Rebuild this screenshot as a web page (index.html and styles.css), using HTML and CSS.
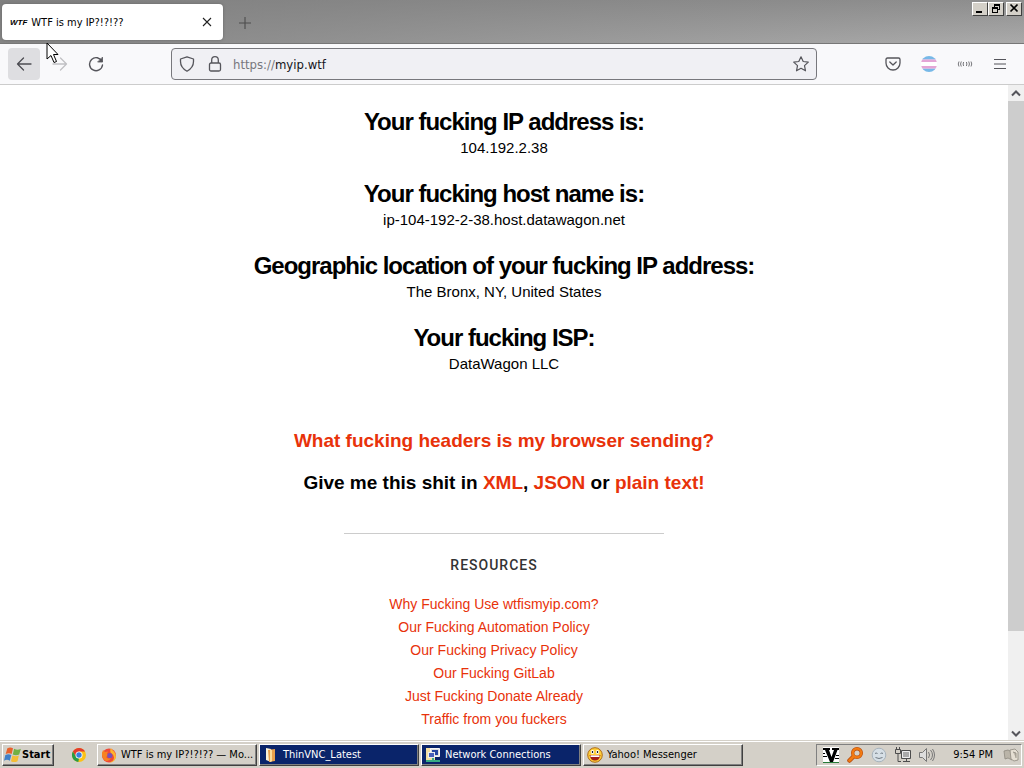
FILE: index.html
```html
<!DOCTYPE html>
<html lang="en">
<head>
<meta charset="utf-8">
<meta name="viewport" content="width=device-width, initial-scale=1">
<title>WTF is my IP?!?!??</title>
<link rel="stylesheet" href="styles.css">
</head>
<body>
<div class="desktop">
  <header class="titlebar">
    <div class="tab">
      <span class="favicon">WTF</span>
      <span class="tab-title">WTF is my IP?!?!??</span>
      <button class="plain tab-close" aria-label="Close tab"><svg width="10" height="10" viewBox="0 0 10 10" fill="none" stroke="#222" stroke-width="1.1"><path d="M1 1l8 8M9 1l-8 8"/></svg></button>
    </div>
    <button class="plain new-tab" aria-label="New tab"><svg width="14" height="14" viewBox="0 0 14 14" fill="none" stroke="#4c4c4c" stroke-width="1.1"><path d="M7 1v12M1 7h12"/></svg></button>
    <div class="window-controls">
      <button class="control" aria-label="Minimize"><svg width="12" height="11" viewBox="0 0 12 11" shape-rendering="crispEdges"><path d="M2 8h6v2H2z"/></svg></button>
      <button class="control" aria-label="Restore"><svg width="12" height="11" viewBox="0 0 12 11" shape-rendering="crispEdges"><path d="M4 1h6v6H8V6h1V3H5v1H4zM2 4h6v6H2zM3 6v3h4V6z" fill-rule="evenodd"/></svg></button>
      <button class="control close" aria-label="Close"><svg width="12" height="11" viewBox="0 0 12 11" fill="none" stroke="#000" stroke-width="1.7"><path d="M2.5 1.5l7 7M9.5 1.5l-7 7"/></svg></button>
    </div>
  </header>

  <nav class="toolbar" aria-label="Navigation">
    <div class="nav-buttons">
      <button class="tool back" aria-label="Back"><svg width="16" height="16" viewBox="0 0 16 16" fill="none" stroke="#4c4c52" stroke-width="1.3" stroke-linecap="round" stroke-linejoin="round"><path d="M15 8H1.5M7.5 2l-6 6 6 6"/></svg></button>
      <button class="tool" aria-label="Forward" disabled><svg width="16" height="16" viewBox="0 0 16 16" fill="none" stroke="#c0c0c3" stroke-width="1.3" stroke-linecap="round" stroke-linejoin="round"><path d="M1 8h13.5M8.5 2l6 6-6 6"/></svg></button>
      <button class="tool" aria-label="Reload"><svg width="16" height="16" viewBox="0 0 16 16" fill="none" stroke="#55555b" stroke-width="1.4" stroke-linecap="round"><path d="M14 5.500A6.500 6.500 0 1 0 14.500 9"/><path d="M14.500 1.500v4.500H10z" fill="#55555b" stroke-linejoin="round" stroke-width=".8"/></svg></button>
    </div>
    <div class="address">
      <svg width="16" height="16" viewBox="0 0 16 16" fill="none" stroke="#55555b" stroke-width="1.3" stroke-linejoin="round"><path d="M8 .8L14.500 3v2.500c0 4.500-2.500 7.500-6.500 9.700C4 13 1.500 10 1.500 5.500V3z"/></svg>
      <svg width="16" height="16" viewBox="0 0 16 16" fill="none" stroke="#55555b" stroke-width="1.3"><rect x="2.5" y="7" width="11" height="8" rx="1.5"/><path d="M4.700 7V4a3.300 3.300 0 0 1 6.600 0v3"/></svg>
      <a class="url" href="#page"><span class="scheme">https://</span>myip.wtf</a>
      <button class="plain" aria-label="Bookmark this page"><svg width="16" height="16" viewBox="0 0 16 16" fill="none" stroke="#55555b" stroke-width="1.2" stroke-linejoin="round"><path d="M8 .8l2.200 4.700 5.100.6-3.800 3.500 1 5.200L8 12.300l-4.500 2.500 1-5.200L.7 6.100l5.100-.6z"/></svg></button>
    </div>
    <div class="extensions">
      <button class="plain" aria-label="Save to Pocket"><svg width="16" height="16" viewBox="0 0 16 16" fill="none" stroke="#55555b" stroke-width="1.3" stroke-linecap="round" stroke-linejoin="round"><path d="M2.500 2h11q1.500 0 1.500 1.500V7A7 7 0 0 1 1 7V3.500Q1 2 2.500 2zM4.800 6L8 9l3.200-3"/></svg></button>
      <button class="plain" aria-label="Extension"><svg width="16" height="16" viewBox="0 0 16 16"><clipPath id="disc"><circle cx="8" cy="8" r="8"/></clipPath><g clip-path="url(#disc)"><path fill="#77b9e8" d="M0 0h16v3.500H0zM0 12.500h16V16H0z"/><path fill="#e4a5d6" d="M0 3.500h16V6H0zM0 10h16v2.500H0z"/><path fill="#fff" d="M0 6h16v4H0z"/></g></svg></button>
      <button class="plain" aria-label="Sound extension"><svg width="16" height="16" viewBox="0 0 16 16" fill="none" stroke="#68686c" stroke-width=".9"><path d="M2 5.500q-1.500 2.500 0 5M4.300 5.500q-1.500 2.500 0 5M6.600 6q-1 2 0 4M9.400 6q1 2 0 4M11.700 5.500q1.500 2.500 0 5M14 5.500q1.500 2.500 0 5"/></svg></button>
      <button class="plain" aria-label="Application menu"><svg width="14" height="16" viewBox="0 0 14 16" fill="none" stroke="#55555b" stroke-width="1.2"><path d="M1 3.500h12M1 8h12M1 12.500h12"/></svg></button>
    </div>
  </nav>

  <div class="viewport">
    <main class="page" id="page">
      <section class="fact"><h2>Your fucking IP address is:</h2><p>104.192.2.38</p></section>
      <section class="fact"><h2>Your fucking host name is:</h2><p>ip-104-192-2-38.host.datawagon.net</p></section>
      <section class="fact"><h2>Geographic location of your fucking IP address:</h2><p>The Bronx, NY, United States</p></section>
      <section class="fact"><h2>Your fucking ISP:</h2><p>DataWagon LLC</p></section>
      <div class="more">
        <p><a href="#headers">What fucking headers is my browser sending?</a></p>
        <p>Give me this shit in <a href="#xml">XML</a>, <a href="#json">JSON</a> or <a href="#text">plain text!</a></p>
      </div>
      <footer class="resources">
        <h3>RESOURCES</h3>
        <ul>
          <li><a href="#why">Why Fucking Use wtfismyip.com?</a></li>
          <li><a href="#automation">Our Fucking Automation Policy</a></li>
          <li><a href="#privacy">Our Fucking Privacy Policy</a></li>
          <li><a href="#gitlab">Our Fucking GitLab</a></li>
          <li><a href="#donate">Just Fucking Donate Already</a></li>
          <li><a href="#traffic">Traffic from you fuckers</a></li>
        </ul>
      </footer>
    </main>
    <div class="scrollbar">
      <button class="plain arrow" aria-label="Scroll up"><svg width="10" height="7" viewBox="0 0 10 7" fill="none" stroke="#55555b" stroke-width="2"><path d="M1 5.500l4-4 4 4"/></svg></button>
      <div class="track"><div class="thumb"></div></div>
      <button class="plain arrow" aria-label="Scroll down"><svg width="10" height="7" viewBox="0 0 10 7" fill="none" stroke="#55555b" stroke-width="2"><path d="M1 1.500l4 4 4-4"/></svg></button>
    </div>
  </div>

  <footer class="taskbar">
    <button class="start"><svg width="18" height="18" viewBox="0 0 16 16"><path fill="#e8622c" d="M3 2q2.500-1.500 5 0L6.800 7Q4.500 5.800 1.500 7z"/><path fill="#72b043" d="M9 2.500q3 1.500 6 0L13.500 7.500q-3 1.300-5.700 0z"/><path fill="#4180c8" d="M1.200 8q3-1.300 5.300 0L5.200 13q-2.500-1.500-5.200 0z"/><path fill="#f4bd35" d="M7.500 8.500q3 1.300 5.700 0L12 13.500q-3 1.500-5.800 0z"/></svg>Start</button>
    <button class="plain launch" aria-label="Chrome"><svg width="16" height="16" viewBox="0 0 16 16"><circle cx="8" cy="8" r="7" fill="#fbc116"/><path fill="#e33b2e" d="M1.900 4.500A7 7 0 0 1 14.100 4.500H8L5 10z"/><path fill="#299c46" d="M1.900 4.500L5 9.800 8 11.500 7.300 15A7 7 0 0 1 1.900 4.500z"/><circle cx="8" cy="8" r="3.5" fill="#fff"/><circle cx="8" cy="8" r="2.7" fill="#397fdd"/></svg></button>
    <div class="tasks">
      <button class="task"><svg width="16" height="16" viewBox="0 0 16 16"><circle cx="8" cy="8.5" r="7" fill="#ef4a37"/><path fill="#ffb52b" d="M10 1q1 2 3 3.500Q15.500 7 15 10.500 13 16 8 15.500q5-1 5-5Q12 7 9.500 5.500 8.500 3 10 1z"/><path fill="#f78320" d="M1 6l1-3 2 2 3-.5L6 7l2 1-3 2q2 2.500 5 1-2 4-6 2.500Q.5 11 1 6z"/><circle cx="8.8" cy="8.5" r="2.6" fill="#7951b5"/></svg><span>WTF is my IP?!?!?? — Mo...</span></button>
      <button class="task active"><svg width="16" height="16" viewBox="0 0 16 16"><path fill="#fbf3da" d="M3 1l5 1v13l-5-2z"/><path fill="#e8a04c" d="M5 3l7-1v12l-6 1z"/><path fill="#fbdc9b" d="M7 3l2-.3v11.600L7 15z"/></svg><span>ThinVNC_Latest</span></button>
      <button class="task active"><svg width="16" height="16" viewBox="0 0 16 16"><path fill="#f3dea2" d="M1 1h5l1 2h3v10H1z"/><path fill="#ddd" stroke="#f8f8f8" d="M5.500 1.500h9v8h-9z"/><path fill="#2445a0" d="M7 3h6v5H7z"/><path fill="#eee" d="M3 5h7v6H3z"/><path fill="#4860b8" d="M4 6h5v4H4z"/><path fill="#36ad83" d="M7 11h2v2h6v2H1v-2h6z"/></svg><span>Network Connections</span></button>
      <button class="task"><svg width="16" height="16" viewBox="0 0 16 16"><circle cx="8" cy="8" r="7.3" fill="#ffcf38" stroke="#ae6c19"/><ellipse cx="5.5" cy="5" rx="1.7" ry="2" fill="#fff"/><ellipse cx="10.5" cy="5" rx="1.7" ry="2" fill="#fff"/><path d="M5.500 4v2M10.500 4v2" stroke="#222" stroke-width="1.3"/><path fill="#a31f15" d="M2.500 8h11q-1 5.500-5.500 5.500T2.500 8z"/><path fill="#fff" d="M3.500 8.300h9V10h-9z"/></svg><span>Yahoo! Messenger</span></button>
    </div>
    <div class="tray">
      <svg width="16" height="16" viewBox="0 0 16 16"><path fill="#fff" d="M0 0h16v16H0z"/><path d="M0 1h7v2H6l2.500 7L11 3H9V1h7v2h-1.500L10 15H7L2 3H0zM0 6h2v1H0zM0 9h4v1H0zM13 8h3v1h-3zM12 11h4v1h-4z"/><path fill="#267b38" d="M0 15h16v1H0z"/></svg>
      <svg width="16" height="16" viewBox="0 0 16 16" fill="none"><path stroke="#b84c0c" stroke-width="4.5" stroke-linecap="round" d="M6 10l-3.500 3.500"/><circle cx="10" cy="6" r="4.3" stroke="#b84c0c" stroke-width="3.4"/><path stroke="#f27a12" stroke-width="2.8" stroke-linecap="round" d="M6 10l-3.500 3.500"/><circle cx="10" cy="6" r="4.3" stroke="#f27a12" stroke-width="2.2"/></svg>
      <svg width="16" height="16" viewBox="0 0 16 16" fill="none" stroke="#6f7982"><circle cx="8" cy="8" r="6.8" fill="#d6dfe6" stroke="#a7b3bd"/><path d="M4 6.500q1-1 2.500 0M9.500 6.500q1.500-1 2.500 0M4.500 10.500q3.500 2 7 0"/></svg>
      <svg width="16" height="16" viewBox="0 0 16 16" fill="none" stroke="#4d4d4d"><path fill="#aaa" d="M6.500 3.500h9v8h-9z"/><path stroke="#eee" d="M7.500 4.500h7v6h-7z"/><path d="M8 14.500h7M11.500 12v2M.5 2.500h5v4h-5zM1.500 0v2M4.500 0v2M3 7v7.500h3"/></svg>
      <svg width="16" height="16" viewBox="0 0 16 16" fill="none" stroke="#777"><path fill="#ddd" d="M.5 5.500h3l4-4v13l-4-4h-3z"/><path d="M9.500 5q2 3 0 6M11.500 3q4 5 0 10M13.500 2q4 6 0 12"/></svg>
      <time class="clock">9:54 PM</time>
      <svg width="16" height="16" viewBox="0 0 16 16" fill="#bab4a8" stroke="#8e897f" stroke-width=".8"><path d="M1 4l4-1 4 2v8l-4-2-3 1z"/><path fill="#e5dfd3" d="M7 3l5-1 3 3v8l-4 1-3-2z"/><path d="M10 5l3 1v5"/></svg>
    </div>
  </footer>
  <svg class="pointer" width="14" height="22" viewBox="0 0 14 22"><path fill="#fff" stroke="#000" d="M1 1v16l4-3.500 3 7 2.500-1-3-7H12z"/></svg>
</div>
</body>
</html>
```
FILE: styles.css
```css
* { box-sizing: border-box; }
body { margin: 0; font-family: "Liberation Sans", Arial, sans-serif; color: #000; }
h2, h3, p, ul { margin: 0; padding: 0; }
button { font: inherit; color: inherit; padding: 0; }
svg { display: block; flex: none; }
a { color: #e8320a; text-decoration: none; }
.plain { border: 0; background: none; }
.desktop { position: relative; display: flex; flex-direction: column; height: 100vh; overflow: hidden; background: #fff; }

.titlebar, .toolbar, .taskbar { flex: none; font-family: "DejaVu Sans Condensed", Tahoma, sans-serif; font-size: 11px; }
.titlebar { display: flex; align-items: flex-start; height: 44px; padding-left: 2px; border-bottom: 1px solid #777; background: linear-gradient(100deg, rgba(128,128,128,.9), rgba(160,160,160,.35)), linear-gradient(#858585, #b0b0b0); }
.tab { display: flex; align-items: center; gap: 4px; width: 221px; height: 36px; margin-top: 4px; padding: 0 11px 0 8px; border-radius: 4px; background: #fff; box-shadow: 0 0 3px #666; }
.favicon { font: italic bold 8px "Liberation Sans", Arial, sans-serif; }
.tab-title { flex: 1; white-space: nowrap; }
.new-tab { margin: 16px 0 0 15px; }
.window-controls { display: flex; margin: 2px 2px 0 auto; }
.control { display: flex; width: 16px; height: 14px; padding-left: 1px; border: 1px solid; border-color: #fff #404040 #404040 #fff; background: #d4d0c8; }
.close { margin-left: 2px; }

.toolbar { display: flex; align-items: center; height: 41px; padding: 0 17px 0 8px; border-bottom: 1px solid #ccc; background: #f9f9fb; }
.nav-buttons { display: flex; gap: 4px; width: 163px; }
.tool { display: grid; place-items: center; width: 32px; height: 32px; border: 0; border-radius: 4px; background: none; }
.back { background: #dedee1; }
.address { display: flex; align-items: center; gap: 12px; flex: 1; height: 32px; padding: 0 7px; border: 1px solid #77777c; border-radius: 4px; background: #f0f0f4; }
.url { flex: 1; margin-left: -2px; color: #15141a; font-size: 13px; }
.scheme { color: #77777d; }
.extensions { display: flex; align-items: center; gap: 20px; padding-left: 68px; }

.viewport { display: flex; flex: 1; min-height: 0; }
.page { flex: 1; min-width: 0; overflow: hidden; padding-top: 22px; text-align: center; font-size: 15px; line-height: 22px; }
.fact { margin-bottom: 20px; }
.fact h2 { font-size: 24px; line-height: 30px; letter-spacing: -1px; }
.more { display: grid; gap: 20px; padding-top: 35px; font-size: 19px; font-weight: bold; }
.resources { width: 320px; margin: 39px auto 0; border-top: 1px solid #ccc; }
.resources h3 { padding: 20px 20px 0 0; font: 500 14px/22px Roboto, sans-serif; letter-spacing: 1px; color: #333; }
.resources ul { list-style: none; padding: 17px 20px 0 0; font-size: 14px; line-height: 23px; }

.scrollbar { display: flex; flex-direction: column; width: 16px; background: #f0f0f0; }
.arrow { display: grid; place-items: center; height: 16px; }
.track { flex: 1; }
.thumb { height: 85%; background: #cdcdcd; }

.taskbar { display: flex; align-items: center; height: 27px; padding-bottom: 1px; border-top: 1px solid #fff; padding-inline: 2px; background: #d4d0c8; box-shadow: 0 -1px #d4d0c8; }
.start, .task { display: flex; align-items: center; height: 22px; border: 1px solid; border-color: #fff #404040 #404040 #fff; background: #d4d0c8; box-shadow: inset -1px -1px #808080; }
.start { width: 52px; padding-left: 1px; font-weight: bold; }
.launch { margin: 0 10px 0 17px; }
.tasks { display: flex; flex: 1; gap: 2px; min-width: 0; }
.task { gap: 4px; width: 160px; padding-left: 3px; white-space: nowrap; }
.task.active { color: #fff; background: #0a246a; }
.tray { display: flex; align-items: center; gap: 8px; height: 22px; padding: 0 2px 0 6px; border: 1px solid; border-color: #808080 #fff #fff #808080; }
.clock { padding: 0 2px 0 10px; white-space: nowrap; }
.pointer { position: absolute; left: 46px; top: 42px; }
```
